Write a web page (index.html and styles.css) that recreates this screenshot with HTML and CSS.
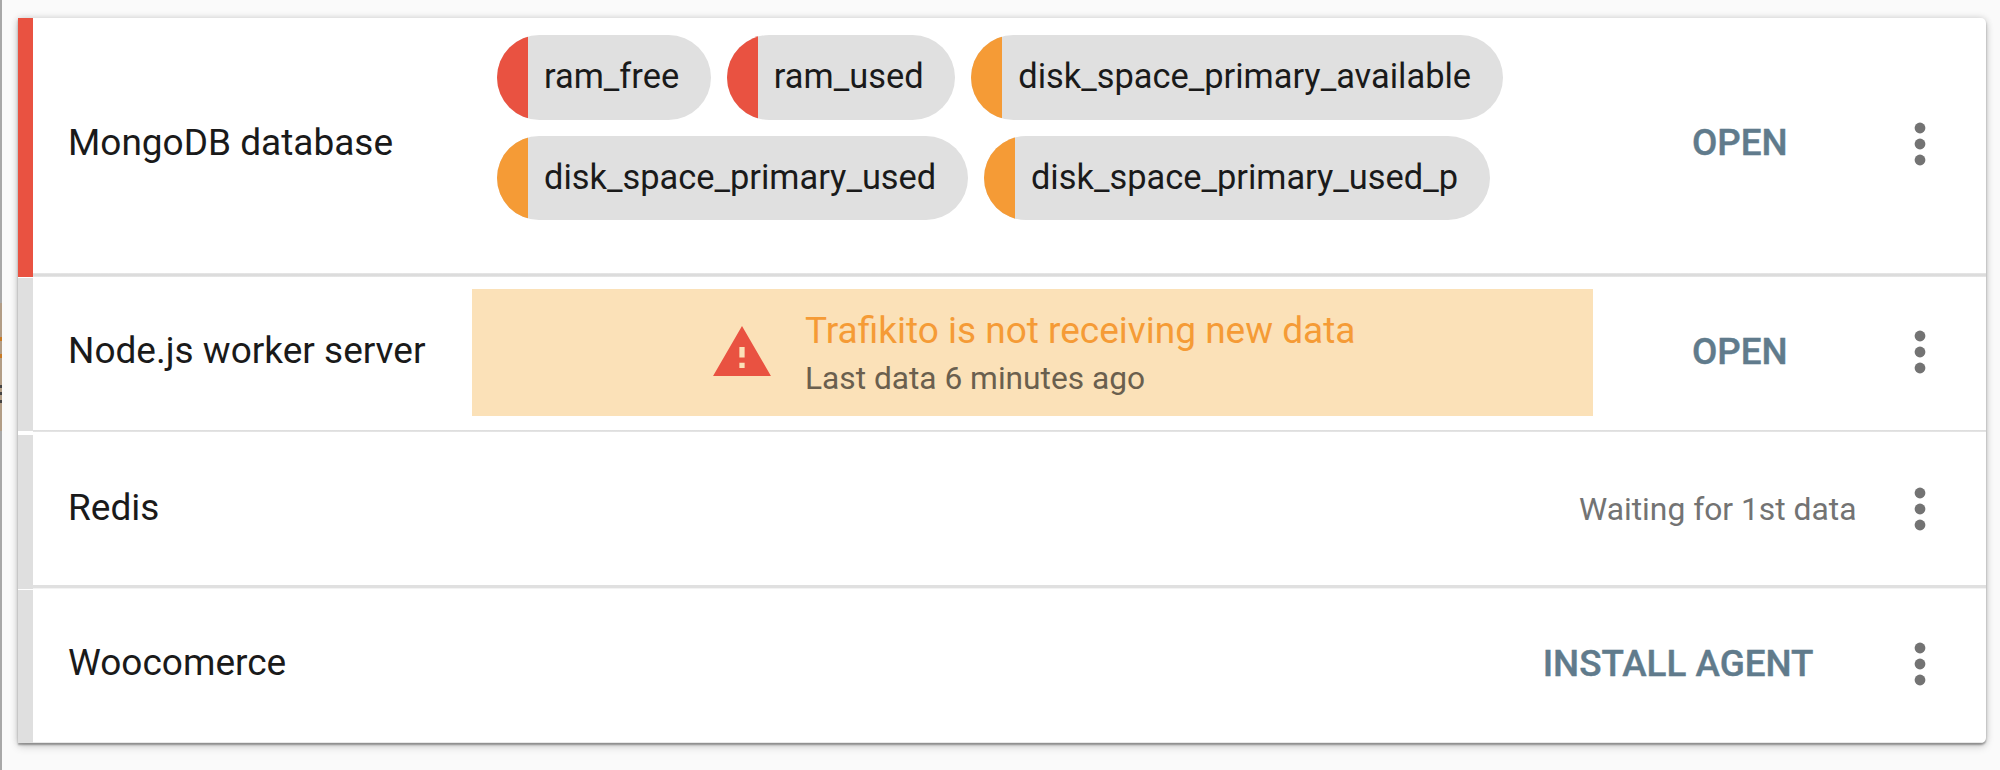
FILE: index.html
```html
<!DOCTYPE html>
<html lang="en">
<head>
<meta charset="utf-8">
<title>Servers</title>
<link rel="stylesheet" href="styles.css">
</head>
<body>
<div class="backdrop"><i class="peek"></i></div>
<main class="card">
  <section class="row row-alert">
    <div class="status status-red"></div>
    <div class="content">
      <h2 class="name">MongoDB database</h2>
      <div class="chips">
        <span class="chip red">ram_free</span>
        <span class="chip red">ram_used</span>
        <span class="chip orange">disk_space_primary_available</span>
        <span class="chip orange">disk_space_primary_used</span>
        <span class="chip orange">disk_space_primary_used_p</span>
      </div>
      <div class="actions"><a class="button">OPEN</a></div>
      <svg class="more" viewBox="0 0 12 44"><circle cx="6" cy="6" r="5.4"/><circle cx="6" cy="22" r="5.4"/><circle cx="6" cy="38" r="5.4"/></svg>
    </div>
  </section>
  <section class="row row-stale">
    <div class="status"></div>
    <div class="content">
      <h2 class="name">Node.js worker server</h2>
      <div class="notice">
        <svg class="warning" viewBox="1 2 22 19"><path d="M1 21h22L12 2 1 21zm12-3h-2v-2h2v2zm0-4h-2v-4h2v4z"/></svg>
        <div class="notice-text">
          <p class="notice-title">Trafikito is not receiving new data</p>
          <p class="notice-sub">Last data 6 minutes ago</p>
        </div>
      </div>
      <div class="actions"><a class="button">OPEN</a></div>
      <svg class="more" viewBox="0 0 12 44"><circle cx="6" cy="6" r="5.4"/><circle cx="6" cy="22" r="5.4"/><circle cx="6" cy="38" r="5.4"/></svg>
    </div>
  </section>
  <section class="row row-waiting">
    <div class="status"></div>
    <div class="content">
      <h2 class="name">Redis</h2>
      <div class="actions"><span class="hint">Waiting for 1st data</span></div>
      <svg class="more" viewBox="0 0 12 44"><circle cx="6" cy="6" r="5.4"/><circle cx="6" cy="22" r="5.4"/><circle cx="6" cy="38" r="5.4"/></svg>
    </div>
  </section>
  <section class="row row-install">
    <div class="status"></div>
    <div class="content">
      <h2 class="name">Woocomerce</h2>
      <div class="actions"><a class="button">INSTALL AGENT</a></div>
      <svg class="more" viewBox="0 0 12 44"><circle cx="6" cy="6" r="5.4"/><circle cx="6" cy="22" r="5.4"/><circle cx="6" cy="38" r="5.4"/></svg>
    </div>
  </section>
</main>
</body>
</html>
```
FILE: styles.css
```css
* { box-sizing: border-box; }

body {
  margin: 0;
  width: 2000px;
  height: 770px;
  overflow: hidden;
  display: flex;
  background: #fafafa;
  font-family: Roboto, sans-serif;
  color: #1a1a1a;
}

/* Sliver of the page behind the panel */
.backdrop {
  width: 2px;
  height: 770px;
  padding-top: 303px;
  background: #a8a8a8;
}
.peek {
  display: block;
  height: 128px;
  background: linear-gradient(#b29d86 34px, #c77a25 34px 38px, #b29d86 38px 51px, #c77a25 51px 55px, #b29d86 55px 82px, #444 82px 85px, #b29d86 85px 89px, #444 89px 92px, #b29d86 92px 97px, #444 97px 100px, #b29d86 100px);
}

.card {
  width: 1968px;
  height: 725px;
  margin: 18px 0 0 16px;
  background: #fff;
  border-radius: 0 5px 5px 0;
  box-shadow: 0 2px 2px rgba(0, 0, 0, .32), 0 0 7px rgba(0, 0, 0, .16), 0 4px 8px rgba(0, 0, 0, .14);
}

.row { display: flex; --shift: 52px; }
.row-alert { height: 259px; --shift: 102px; }
.row-stale { height: 155px; --shift: 51px; }
.row-waiting { height: 157px; --shift: 53px; }
.row-install { height: 154px; --shift: 51px; }

.status {
  flex: none;
  width: 15px;
  margin-top: 1px;
  background: #dfdfdf;
}
.status-red { margin-top: 0; background: #e95241; }
.row-stale .status { margin: 1px 0; }
.row-waiting .status { margin-top: 3px; }

.content {
  flex: 1;
  display: flex;
  align-items: flex-start;
  padding: 0 60.5px 0 35px;
}
.row-alert .content { background: linear-gradient(#e9e9e9, #dcdcdc 35% 65%, #e9e9e9) bottom / 100% 4px no-repeat; }
.row-stale .content { background: linear-gradient(#dcdcdc, #e6e6e6) bottom / 100% 2px no-repeat; }
.row-waiting .content { background: linear-gradient(#e0e0e0 75%, #f3f3f3 75%) bottom / 100% 4px no-repeat; }
.row-install .content { background: linear-gradient(#e8e8e8, #e8e8e8) bottom / 100% 1px no-repeat; border-radius: 0 0 5px 0; }

.name {
  flex: none;
  width: 404px;
  margin: calc(var(--shift) + 1px) 0 0;
  font-size: 37px;
  font-weight: 400;
  line-height: 44px;
  white-space: nowrap;
}

.chips {
  flex: none;
  width: 1121px;
  padding: 17.3px 0 0 25px;
  display: flex;
  flex-wrap: wrap;
  gap: 16px;
}
.chip {
  display: flex;
  height: 84.5px;
  padding-right: 31.7px;
  border-radius: 43px;
  overflow: hidden;
  background: #e0e0e0;
  font-size: 34.4px;
  line-height: 83px;
}
.chip::before {
  content: "";
  width: 31px;
  margin-right: 16px;
  background: #f59b36;
}
.chip.red::before { background: #e95241; }

.notice {
  flex: none;
  width: 1121px;
  height: 127px;
  margin-top: 12px;
  padding-left: 240.5px;
  display: flex;
  background: #fbe1b8;
}
.warning {
  width: 58px;
  height: 50px;
  margin-top: 37px;
  fill: #e95241;
}
.notice-text { margin-left: 34.5px; padding-top: 18px; }
.notice-text p { margin: 0; white-space: nowrap; }
.notice-title { font-size: 37px; line-height: 48px; color: #f59b36; }
.notice-sub { font-size: 31.7px; line-height: 47px; color: #6a5f4e; }

.actions {
  flex: 1;
  text-align: center;
  font-size: 36.8px;
  line-height: 44px;
}
.row-alert .actions, .row-stale .actions { padding-right: 27px; }
.row-alert .actions { margin-top: 103px; }
.row-stale .actions { margin-top: 53px; }
.row-waiting .actions { margin-top: 55px; padding-right: 57px; text-align: right; font-size: 31.8px; }
.row-install .actions { margin-top: 53px; padding-right: 100px; text-align: right; }
.button { font-weight: 500; color: #607b8c; -webkit-text-stroke: .4px #607b8c; }
.hint { color: #737373; }

.more {
  flex: none;
  width: 12px;
  height: 44px;
  margin-top: calc(var(--shift) + 2.3px);
  fill: #737373;
}
```
